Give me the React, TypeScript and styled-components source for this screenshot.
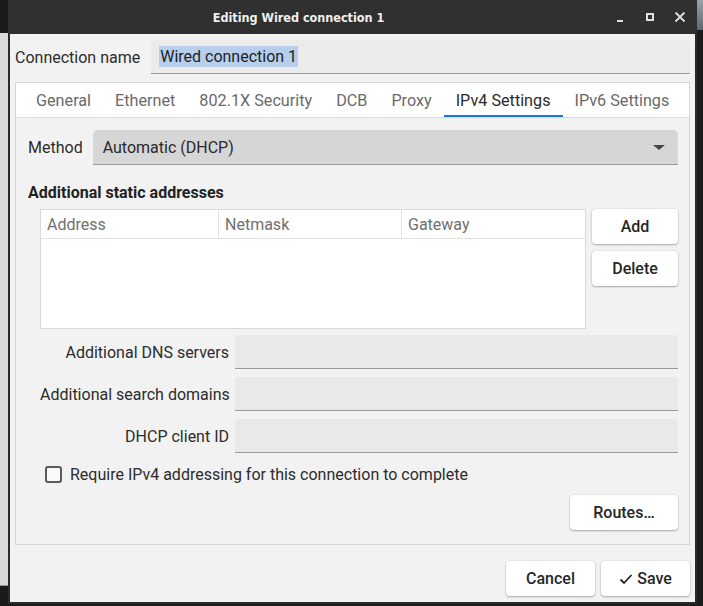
import React from "react";
import styled, { createGlobalStyle } from "styled-components";

const Global = createGlobalStyle`
  html, body { margin: 0; padding: 0; }
  body { width: 703px; height: 606px; overflow: hidden; background: #161616; font-family: Roboto, "Noto Sans", sans-serif; }
`;

const Desktop = styled.div`
  position: relative;
  width: 703px;
  height: 606px;
  overflow: hidden;
  background: #1b1b1b;
`;

const BackWindow = styled.div`
  position: absolute;
  left: 0;
  top: 33px;
  width: 12px;
  height: 552px;
  background: #d9d9d9;
  border-bottom: 1px solid #999;
`;

const BackPhoto = styled.div`
  position: absolute;
  right: 0;
  top: 0;
  width: 12px;
  height: 30px;
  background: linear-gradient(180deg, #9aa3ab, #5e666d);
`;

const Window = styled.div`
  position: absolute;
  left: 8px;
  top: 0;
  width: 689px;
  height: 604px;
  background: #f2f2f2;
  border: 2px solid #2a2a2a;
  border-top: none;
  box-sizing: border-box;
  display: flex;
  flex-direction: column;
`;

const TitleBar = styled.div`
  height: 34px;
  flex: none;
  background: #303030;
  position: relative;
  display: flex;
  align-items: center;
  justify-content: center;
  margin: 0 -2px;
`;

const Title = styled.div`
  color: #f0f0f0;
  font-family: "DejaVu Sans Condensed", "DejaVu Sans", sans-serif;
  font-weight: bold;
  font-size: 12.5px;
  margin-right: 108px;
`;

const Controls = styled.div`
  position: absolute;
  right: 8px;
  top: 0;
  height: 34px;
  display: flex;
  align-items: center;
  gap: 12px;
`;

const Ctrl = styled.div`
  width: 18px;
  height: 18px;
  display: flex;
  align-items: center;
  justify-content: center;
`;

const Body = styled.div`
  flex: 1;
  display: flex;
  flex-direction: column;
  padding: 6px 5px 0 5px;
`;

const NameRow = styled.div`
  display: flex;
  align-items: center;
  gap: 11px;
  height: 34px;
`;

const Label = styled.div<{ $bold?: boolean; $align?: string }>`
  font-size: 16px;
  color: #2c2c2c;
  font-weight: ${(p) => (p.$bold ? 700 : 400)};
  text-align: ${(p) => p.$align || "left"};
  white-space: nowrap;
`;

const Entry = styled.div<{ $bg?: string }>`
  flex: 1;
  height: 34px;
  box-sizing: border-box;
  background: ${(p) => p.$bg || "#e9e9e9"};
  border-bottom: 1px solid #9a9a9a;
  border-radius: 4px 4px 0 0;
  display: flex;
  align-items: center;
  padding-left: 8px;
  font-size: 16px;
  color: #1e1e1e;
`;

const Selected = styled.span`
  background: #b7cfec;
  padding: 1px 1px;
`;

const Notebook = styled.div`
  margin-top: 8px;
  border: 1px solid #d6d6d6;
  height: 463px;
  box-sizing: border-box;
  display: flex;
  flex-direction: column;
`;

const TabBar = styled.div`
  height: 34px;
  flex: none;
  background: #fff;
  border-bottom: 1px solid #dcdcdc;
  display: flex;
  padding-left: 8px;
`;

const Tab = styled.div<{ $active?: boolean }>`
  padding: 0 12px;
  display: flex;
  align-items: center;
  font-size: 16.2px;
  color: ${(p) => (p.$active ? "#2a2a2a" : "#6a6a6a")};
  box-shadow: ${(p) => (p.$active ? "inset 0 -2px 0 #1a73e8" : "none")};
`;

const Page = styled.div`
  flex: 1;
  padding: 12px 11px 0 12px;
  display: flex;
  flex-direction: column;
`;

const MethodRow = styled.div`
  display: flex;
  align-items: center;
  gap: 10px;
  height: 35px;
`;

const Combo = styled.div`
  flex: 1;
  height: 35px;
  box-sizing: border-box;
  background: #d6d6d6;
  border-bottom: 1px solid #9a9a9a;
  border-radius: 5px 5px 0 0;
  display: flex;
  align-items: center;
  justify-content: space-between;
  padding: 0 13px 0 10px;
  font-size: 16px;
  color: #2a2a2a;
`;

const Arrow = styled.div`
  width: 0;
  height: 0;
  border-left: 6px solid transparent;
  border-right: 6px solid transparent;
  border-top: 5px solid #444;
`;

const SectionTitle = styled.div`
  margin-top: 19px;
  font-size: 16px;
  font-weight: 700;
  color: #222;
  height: 18px;
  line-height: 18px;
`;

const AddrArea = styled.div`
  margin-top: 7px;
  margin-left: 12px;
  display: flex;
  gap: 6px;
  align-items: flex-start;
`;

const Table = styled.div`
  width: 546px;
  height: 120px;
  box-sizing: border-box;
  background: #fff;
  border: 1px solid #d9d9d9;
`;

const HeaderRow = styled.div`
  display: grid;
  grid-template-columns: 178px 183px 1fr;
  height: 28px;
  border-bottom: 1px solid #e2e2e2;
`;

const HeadCell = styled.div`
  display: flex;
  align-items: center;
  padding-left: 6px;
  font-size: 16px;
  color: #707070;
  border-right: 1px solid #e2e2e2;
  &:last-child { border-right: none; }
`;

const ButtonCol = styled.div`
  display: flex;
  flex-direction: column;
  gap: 7px;
`;

const Button = styled.div<{ $w: number }>`
  width: ${(p) => p.$w}px;
  height: 35px;
  box-sizing: border-box;
  background: #fff;
  border-radius: 4px;
  box-shadow: 0 1px 2px rgba(0, 0, 0, 0.28), 0 0 0 1px rgba(0, 0, 0, 0.04);
  display: flex;
  align-items: center;
  justify-content: center;
  font-size: 16px;
  font-weight: 500;
  color: #262626;
  gap: 4px;
`;

const Form = styled.div`
  margin-top: 6px;
  margin-left: 12px;
  display: grid;
  grid-template-columns: 189px 1fr;
  column-gap: 6px;
  row-gap: 8px;
  align-items: center;
`;

const CheckRow = styled.div`
  margin-top: 12px;
  margin-left: 17px;
  display: flex;
  align-items: center;
  gap: 8px;
  height: 18px;
`;

const Box = styled.div`
  width: 17px;
  height: 17px;
  box-sizing: border-box;
  border: 2px solid #5a5a5a;
  border-radius: 3px;
  background: #fafafa;
`;

const RoutesRow = styled.div`
  margin-top: 12px;
  display: flex;
  justify-content: flex-end;
`;

const Footer = styled.div`
  display: flex;
  justify-content: flex-end;
  gap: 6px;
  margin-top: 16px;
`;

export default function App() {
  const tabs = ["General", "Ethernet", "802.1X Security", "DCB", "Proxy", "IPv4 Settings", "IPv6 Settings"];
  return (
    <>
      <Global />
      <Desktop>
        <BackWindow />
        <BackPhoto />
        <Window>
          <TitleBar>
            <Title>Editing Wired connection 1</Title>
            <Controls>
              <Ctrl>
                <svg width="12" height="12" viewBox="0 0 12 12">
                  <rect x="3" y="9" width="6" height="2" fill="#e0e0e0" />
                </svg>
              </Ctrl>
              <Ctrl>
                <svg width="12" height="12" viewBox="0 0 12 12">
                  <rect x="3" y="3" width="6" height="6" fill="none" stroke="#e0e0e0" strokeWidth="2" />
                </svg>
              </Ctrl>
              <Ctrl>
                <svg width="14" height="14" viewBox="0 0 14 14">
                  <path d="M2.5 2.5 L11.5 11.5 M11.5 2.5 L2.5 11.5" stroke="#e0e0e0" strokeWidth="1.8" />
                </svg>
              </Ctrl>
            </Controls>
          </TitleBar>
          <Body>
            <NameRow>
              <Label>Connection name</Label>
              <Entry $bg="#ebebeb">
                <Selected>Wired connection 1</Selected>
              </Entry>
            </NameRow>
            <Notebook>
              <TabBar>
                {tabs.map((t) => (
                  <Tab key={t} $active={t === "IPv4 Settings"}>
                    {t}
                  </Tab>
                ))}
              </TabBar>
              <Page>
                <MethodRow>
                  <Label>Method</Label>
                  <Combo>
                    <span>Automatic (DHCP)</span>
                    <Arrow />
                  </Combo>
                </MethodRow>
                <SectionTitle>Additional static addresses</SectionTitle>
                <AddrArea>
                  <Table>
                    <HeaderRow>
                      <HeadCell>Address</HeadCell>
                      <HeadCell>Netmask</HeadCell>
                      <HeadCell>Gateway</HeadCell>
                    </HeaderRow>
                  </Table>
                  <ButtonCol>
                    <Button $w={86}>Add</Button>
                    <Button $w={86}>Delete</Button>
                  </ButtonCol>
                </AddrArea>
                <Form>
                  <Label $align="right">Additional DNS servers</Label>
                  <Entry />
                  <Label $align="right">Additional search domains</Label>
                  <Entry />
                  <Label $align="right">DHCP client ID</Label>
                  <Entry />
                </Form>
                <CheckRow>
                  <Box />
                  <Label>Require IPv4 addressing for this connection to complete</Label>
                </CheckRow>
                <RoutesRow>
                  <Button $w={108}>Routes…</Button>
                </RoutesRow>
              </Page>
            </Notebook>
            <Footer>
              <Button $w={89}>Cancel</Button>
              <Button $w={89}>
                <svg width="14" height="12" viewBox="0 0 14 12">
                  <path d="M1.5 6.5 L5 10 L12.5 2" fill="none" stroke="#262626" strokeWidth="1.8" />
                </svg>
                Save
              </Button>
            </Footer>
          </Body>
        </Window>
      </Desktop>
    </>
  );
}
